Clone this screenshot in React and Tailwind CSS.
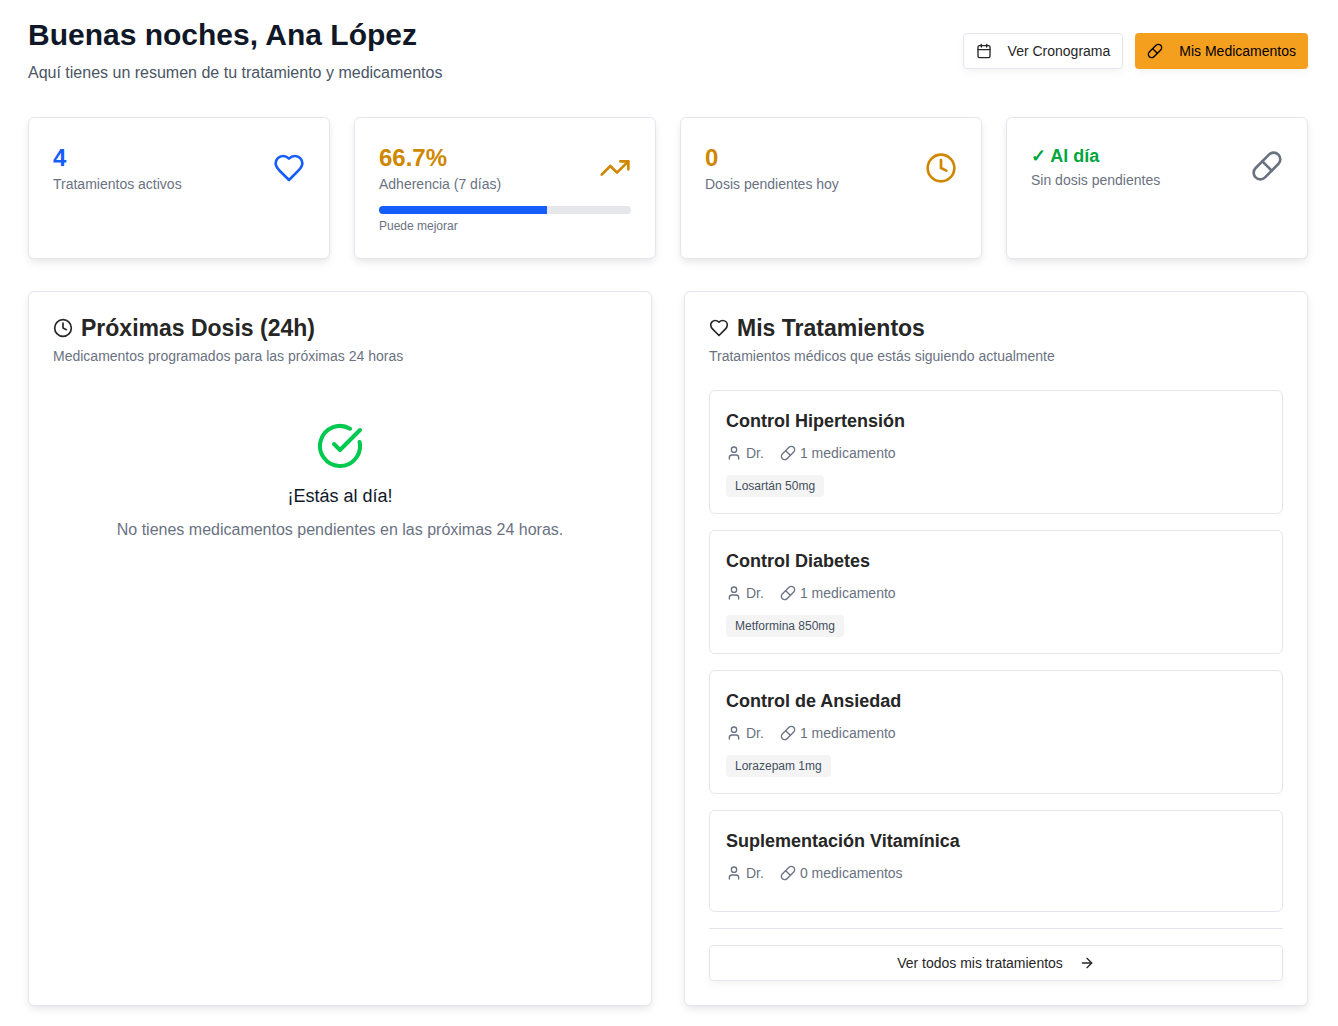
import React from "react";
import { ArrowRight, Calendar, CircleCheckBig, Clock, Pill, TrendingUp, User } from "lucide-react";

const treatments = [
  { name: "Control Hipertensión", count: "1 medicamento", meds: ["Losartán 50mg"] },
  { name: "Control Diabetes", count: "1 medicamento", meds: ["Metformina 850mg"] },
  { name: "Control de Ansiedad", count: "1 medicamento", meds: ["Lorazepam 1mg"] },
  { name: "Suplementación Vitamínica", count: "0 medicamentos", meds: [] },
];

function Heart({ className }) {
  return (
    <svg viewBox="0 0 24 24" fill="none" stroke="currentColor" strokeWidth="2" strokeLinecap="round" strokeLinejoin="round" className={className} aria-hidden="true">
      <path d="M19 14c1.49-1.46 3-3.21 3-5.5A5.5 5.5 0 0 0 16.5 3c-1.76 0-3 .5-4.5 2-1.5-1.5-2.74-2-4.5-2A5.5 5.5 0 0 0 2 8.5c0 2.3 1.5 4.05 3 5.5l7 7Z" />
    </svg>
  );
}

function Card({ children }) {
  return (
    <section className="rounded-md border border-[#e4e6ee] bg-white p-6 shadow-[0_4px_8px_-1px_rgba(0,0,0,0.1),0_1px_2px_-2px_rgba(0,0,0,0.1)]">
      {children}
    </section>
  );
}

function Stat({ value, valueClass, label, icon, children }) {
  return (
    <Card>
      <div className="flex items-center justify-between">
        <div>
          <p className={"font-bold " + valueClass}>{value}</p>
          <p className="text-sm text-gray-500">{label}</p>
        </div>
        {icon}
      </div>
      {children}
    </Card>
  );
}

function PanelHeader({ icon, title, subtitle }) {
  return (
    <header className="mb-6">
      <h2 className="flex items-center gap-2 text-[23px] leading-6 font-semibold">
        {icon}
        {title}
      </h2>
      <p className="mt-1.5 text-sm text-gray-500">{subtitle}</p>
    </header>
  );
}

const buttonBase = "flex h-9 items-center justify-center gap-4 rounded px-3 text-sm shadow-[0_4px_8px_-1px_rgba(0,0,0,0.05)] ";

export default function App() {
  return (
    <main className="min-h-screen bg-white pt-[17px] pr-[30px] pb-5 pl-7 font-['Liberation_Sans',Arial,sans-serif] text-[#262626]">
      <header className="mb-8 flex flex-wrap items-center justify-between gap-4">
        <div>
          <h1 className="text-3xl font-bold text-gray-900">Buenas noches, Ana López</h1>
          <p className="mt-2 text-base text-gray-600">Aquí tienes un resumen de tu tratamiento y medicamentos</p>
        </div>
        <div className="flex gap-3">
          <button type="button" className={buttonBase + "border border-[#e4e6ee] bg-white"}>
            <Calendar className="size-4" />
            Ver Cronograma
          </button>
          <button type="button" className={buttonBase + "bg-[#f59f1f] text-black"}>
            <Pill className="size-4" />
            Mis Medicamentos
          </button>
        </div>
      </header>

      <div className="mb-8 grid grid-cols-1 gap-6 md:grid-cols-2 lg:grid-cols-4">
        <Stat value="4" valueClass="text-2xl text-[#155dfc]" label="Tratamientos activos" icon={<Heart className="size-8 text-[#155dfc]" />} />
        <Stat value="66.7%" valueClass="text-2xl text-[#d08700]" label="Adherencia (7 días)" icon={<TrendingUp className="size-8 text-[#d08700]" />}>
          <div className="mt-3 h-2 overflow-hidden rounded-full bg-gray-200">
            <div className="h-full bg-[#155dfc]" style={{ width: "66.7%" }} />
          </div>
          <p className="mt-1 text-xs text-gray-500">Puede mejorar</p>
        </Stat>
        <Stat value="0" valueClass="text-2xl text-[#d08700]" label="Dosis pendientes hoy" icon={<Clock className="size-8 text-[#d08700]" />} />
        <Stat value="✓ Al día" valueClass="text-lg leading-7 text-[#00a63e]" label="Sin dosis pendientes" icon={<Pill className="size-8 text-gray-500" />} />
      </div>

      <div className="grid grid-cols-1 gap-8 lg:grid-cols-2">
        <Card>
          <PanelHeader icon={<Clock className="size-5" />} title="Próximas Dosis (24h)" subtitle="Medicamentos programados para las próximas 24 horas" />
          <div className="flex flex-col items-center py-8 text-center">
            <CircleCheckBig className="size-12 text-[#00c950]" />
            <h3 className="mt-3 text-lg leading-7 text-gray-900">¡Estás al día!</h3>
            <p className="mt-2 text-base text-gray-500">No tienes medicamentos pendientes en las próximas 24 horas.</p>
          </div>
        </Card>

        <Card>
          <PanelHeader icon={<Heart className="size-5" />} title="Mis Tratamientos" subtitle="Tratamientos médicos que estás siguiendo actualmente" />
          <ul className="flex flex-col gap-4">
            {treatments.map((t) => (
              <li key={t.name} className="rounded-md border border-[#e4e6ee] p-4">
                <h3 className="text-lg leading-7 font-semibold">{t.name}</h3>
                <div className="mt-2 flex gap-4 text-sm text-gray-500">
                  <span className="flex items-center gap-1">
                    <User className="size-4" />
                    Dr.
                  </span>
                  <span className="flex items-center gap-1">
                    <Pill className="size-4" />
                    {t.count}
                  </span>
                </div>
                <div className="mt-3 flex flex-wrap gap-1">
                  {t.meds.map((m) => (
                    <span key={m} className="rounded border border-transparent bg-[#f4f4f4] px-2 py-0.5 text-xs text-[#45505f]">{m}</span>
                  ))}
                </div>
              </li>
            ))}
          </ul>
          <div className="mt-4 border-t border-[#e4e6ee] pt-4">
            <button type="button" className={buttonBase + "w-full border border-[#e4e6ee] bg-white"}>
              Ver todos mis tratamientos
              <ArrowRight className="size-4" />
            </button>
          </div>
        </Card>
      </div>
    </main>
  );
}
